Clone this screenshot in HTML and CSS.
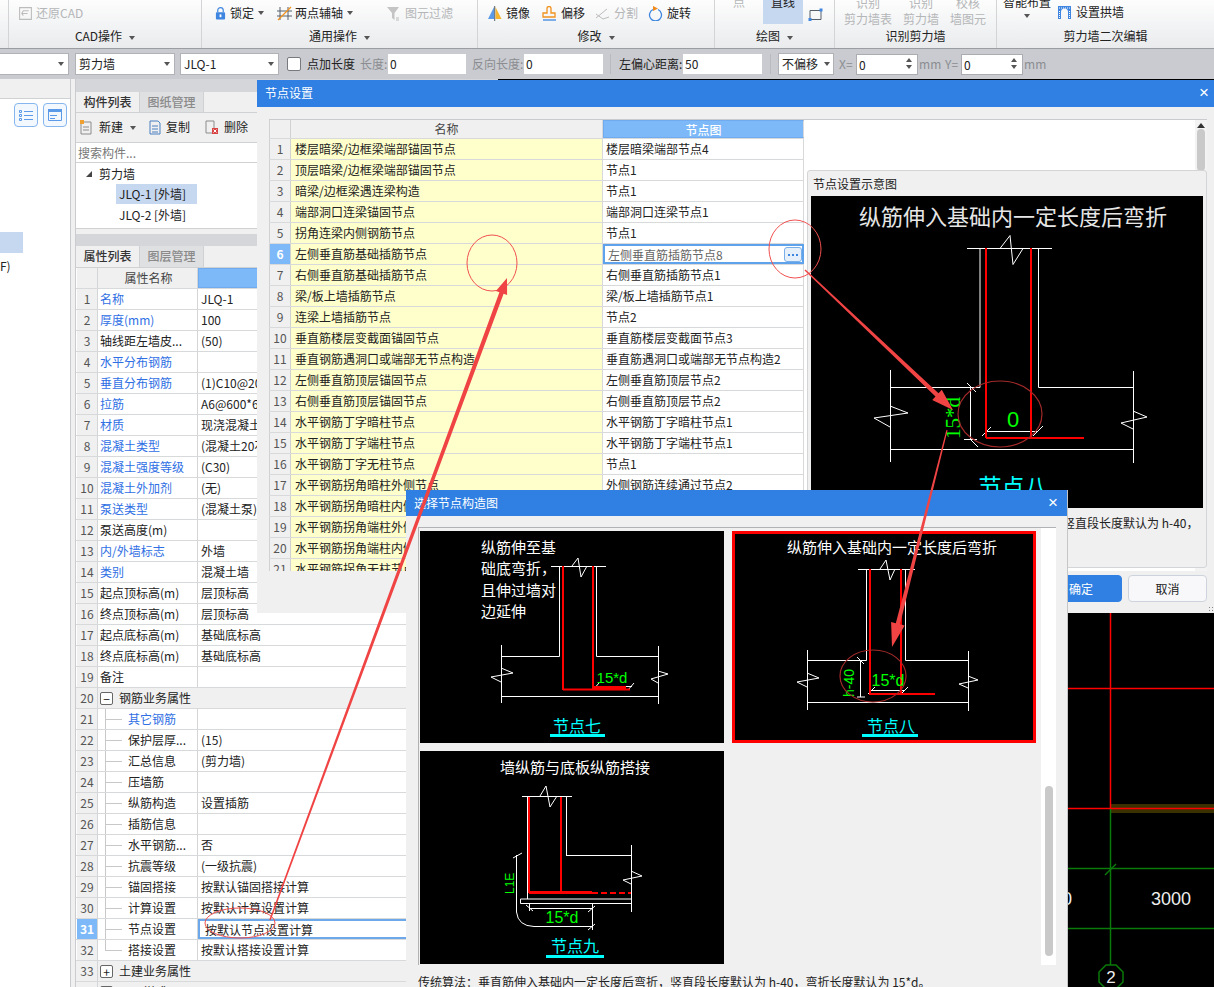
FILE: index.html
```html
<!DOCTYPE html>
<html lang="zh-CN">
<head>
<meta charset="utf-8">
<title>节点设置</title>
<link rel="stylesheet" href="styles.css">
</head>
<body>
<div class="app">
  <header class="ribbon">
    <section class="group g-cad">
      <div class="items">
        <span class="tool off"><svg class="ic" viewBox="0 0 14 14"><path d="M1.500 1.500h11v11h-11zM10 4.500H5L3.500 7 5 9M3.500 7H9" class="i-grey"/></svg>还原CAD</span>
      </div>
      <div class="glabel">CAD操作<i class="caret"></i></div>
    </section>
    <section class="group g-common">
      <div class="items">
        <span class="tool"><svg class="ic ic-lock" viewBox="0 0 12 15"><path d="M3 6V4a3 3 0 0 1 6 0v2" class="i-blue"/><rect x="1" y="6" width="10" height="8" rx="1" fill="#3f86e0"/><rect x="5" y="8.500" width="2" height="3" fill="#fff"/></svg>锁定<i class="caret caret-t"></i></span>
        <span class="tool t-axis"><svg class="ic ic-axis" viewBox="0 0 15 15"><path d="M3 1v13M11 1v13M0 5h15M0 10h15" class="i-dark"/><path d="M1 14L14 1" class="i-orange"/></svg>两点辅轴<i class="caret caret-t"></i></span>
        <span class="tool off t-filter"><svg class="ic" viewBox="0 0 15 15"><path d="M1 1h12L8.500 7v7L6 12V7z" fill="#c4c4c4"/><path d="M10 12h3M10 14h3" class="i-grey"/></svg>图元过滤</span>
      </div>
      <div class="glabel">通用操作<i class="caret"></i></div>
    </section>
    <section class="group g-edit">
      <div class="items">
        <span class="tool"><svg class="ic" viewBox="0 0 15 15"><path d="M7 1L1 13h6z" fill="#5b9ae8"/><path d="M8.500 1l6 12h-6z" fill="#f5b52e"/><path d="M7.700 0v15" class="i-dark"/></svg>镜像</span>
        <span class="tool t-gap"><svg class="ic" viewBox="0 0 15 15"><path d="M5 2.500a2 2 0 0 1 4 0V7h4v4H1V7h4z" class="i-orange"/><path d="M1 14h13" class="i-blue"/></svg>偏移</span>
        <span class="tool off t-gap2"><svg class="ic" viewBox="0 0 15 15"><path d="M1 12L12 3M1 8l7 5 6-2" class="i-grey"/></svg>分割</span>
        <span class="tool t-gap2"><svg class="ic" viewBox="0 0 15 15"><path d="M5 3.500a6 6 0 1 0 5 0" class="i-blue"/><path d="M5 0l5 2.500-5 2.500z" fill="#f08a1d"/></svg>旋转</span>
      </div>
      <div class="glabel">修改<i class="caret"></i></div>
    </section>
    <section class="group g-draw">
      <div class="items items-draw">
        <span class="clip-txt off c-point">点</span>
        <span class="clip-txt on">直线</span>
        <svg class="ic ic-rect" viewBox="0 0 15 14"><path d="M2 3h11v9H2z" class="i-dark"/><rect x="11.500" y="1" width="3" height="3" fill="#3f86e0"/><rect x="0.500" y="10.500" width="3" height="3" fill="#3f86e0"/></svg>
      </div>
      <div class="glabel">绘图<i class="caret"></i></div>
    </section>
    <section class="group g-rec">
      <div class="items items-rec">
        <span class="stack off"><b>识别</b><b>剪力墙表</b></span>
        <span class="stack off"><b>识别</b><b>剪力墙</b></span>
        <span class="stack off"><b>校核</b><b>墙图元</b></span>
      </div>
      <div class="glabel">识别剪力墙</div>
    </section>
    <section class="group g-second">
      <div class="items items-second">
        <span class="stack smart"><b>智能布置</b><i class="caret caret-t"></i></span>
        <span class="tool"><svg class="ic" viewBox="0 0 15 15"><path d="M1 1h13v13h-3V7a3.500 3.500 0 0 0-7 0v7H1z" fill="#3f86e0"/><path d="M2 3h11M2.500 6v7M12.500 6v7" stroke="#fff" stroke-dasharray="1 1" fill="none"/></svg>设置拱墙</span>
      </div>
      <div class="glabel">剪力墙二次编辑</div>
    </section>
  </header>

  <nav class="toolbar">
    <span class="sel s-1"><i class="caret caret-t"></i></span>
    <span class="sel s-2">剪力墙<i class="caret caret-t"></i></span>
    <span class="sel s-3">JLQ-1<i class="caret caret-t"></i></span>
    <span class="check"></span>
    <span class="lbl l-add">点加长度</span>
    <span class="lbl off l-len">长度:</span>
    <span class="inp i-len">0</span>
    <span class="lbl off l-rev">反向长度:</span>
    <span class="inp i-rev">0</span>
    <span class="sep s-a"></span>
    <span class="lbl l-off">左偏心距离:</span>
    <span class="inp i-off">50</span>
    <span class="sep s-b"></span>
    <span class="sel s-4">不偏移<i class="caret caret-t"></i></span>
    <span class="lbl off l-x">X=</span>
    <span class="spin">0<i class="arrows"></i></span>
    <span class="lbl off l-mm">mm</span>
    <span class="lbl off l-y">Y=</span>
    <span class="spin">0<i class="arrows"></i></span>
    <span class="lbl off l-mm">mm</span>
  </nav>

  <main class="workspace">
    <aside class="leftpane">
      <div class="lp-head"></div>
      <div class="lp-icons">
        <span class="lp-btn"><svg viewBox="0 0 16 14"><path d="M1.500 2.500h2v2h-2zM1.500 6.500h2v2h-2zM1.500 10.500h2v2h-2zM6 3.500h9M6 7.500h9M6 11.500h9" class="i-blue1"/></svg></span>
        <span class="lp-btn"><svg viewBox="0 0 16 14"><path d="M1.500 1.500h13v11h-13z" class="i-blue1"/><path d="M1 1h14v3H1z" fill="#5b9ae8"/><path d="M3 7.500h7M3 10.500h5" class="i-blue1"/></svg></span>
      </div>
      <div class="lp-sel"></div>
      <div class="lp-text">F)</div>
    </aside>

    <div class="panel">
      <div class="strip"></div>
      <div class="tabs"><span class="tab active">构件列表</span><span class="tab">图纸管理</span></div>
      <div class="ptools">
        <span class="pt pt-new"><svg class="ic" viewBox="0 0 14 15"><path d="M3 2h8v12H1V4" class="i-grey2"/><path d="M3 7h6M3 10h6" class="i-grey2"/><path d="M0 0h4v4H0z" fill="#f0a030"/></svg>新建<i class="caret caret-t"></i></span>
        <span class="pt pt-copy"><svg class="ic" viewBox="0 0 14 15"><path d="M2 1h8l2 2v11H2zM4 6h6M4 9h6M4 12h6" class="i-blue2"/></svg>复制</span>
        <span class="pt pt-del"><svg class="ic" viewBox="0 0 14 15"><path d="M1 1h8v12H1z" class="i-grey2"/><path d="M7 8h6v6H7z" fill="#d94444"/><path d="M8.500 9.500l3 3m0-3l-3 3" stroke="#fff" fill="none"/></svg>删除</span>
      </div>
      <div class="search">搜索构件...</div>
      <div class="tree">
        <div class="tr tr-0"><i class="tri"></i>剪力墙</div>
        <div class="tr tr-1"><span class="hl">JLQ-1 [外墙]</span></div>
        <div class="tr tr-1"><span class="ph">JLQ-2 [外墙]</span></div>
      </div>
      <div class="gapv"></div>
      <div class="strip strip-2"></div>
      <div class="tabs tabs-2"><span class="tab active">属性列表</span><span class="tab">图层管理</span></div>
      <div class="ptable">
        <div class="prow head"><span class="n"></span><span class="k">属性名称</span><span class="v hsel"></span></div>
        <div class="prow"><span class="n">1</span><span class="k blue">名称</span><span class="v">JLQ-1</span></div>
        <div class="prow"><span class="n">2</span><span class="k blue">厚度(mm)</span><span class="v">100</span></div>
        <div class="prow"><span class="n">3</span><span class="k">轴线距左墙皮...</span><span class="v">(50)</span></div>
        <div class="prow"><span class="n">4</span><span class="k blue">水平分布钢筋</span><span class="v"></span></div>
        <div class="prow"><span class="n">5</span><span class="k blue">垂直分布钢筋</span><span class="v">(1)C10@200</span></div>
        <div class="prow"><span class="n">6</span><span class="k blue">拉筋</span><span class="v">A6@600*600</span></div>
        <div class="prow"><span class="n">7</span><span class="k blue">材质</span><span class="v">现浇混凝土</span></div>
        <div class="prow"><span class="n">8</span><span class="k blue">混凝土类型</span><span class="v">(混凝土20石子)</span></div>
        <div class="prow"><span class="n">9</span><span class="k blue">混凝土强度等级</span><span class="v">(C30)</span></div>
        <div class="prow"><span class="n">10</span><span class="k blue">混凝土外加剂</span><span class="v">(无)</span></div>
        <div class="prow"><span class="n">11</span><span class="k blue">泵送类型</span><span class="v">(混凝土泵)</span></div>
        <div class="prow"><span class="n">12</span><span class="k">泵送高度(m)</span><span class="v"></span></div>
        <div class="prow"><span class="n">13</span><span class="k blue">内/外墙标志</span><span class="v">外墙</span></div>
        <div class="prow"><span class="n">14</span><span class="k blue">类别</span><span class="v">混凝土墙</span></div>
        <div class="prow"><span class="n">15</span><span class="k">起点顶标高(m)</span><span class="v">层顶标高</span></div>
        <div class="prow"><span class="n">16</span><span class="k">终点顶标高(m)</span><span class="v">层顶标高</span></div>
        <div class="prow"><span class="n">17</span><span class="k">起点底标高(m)</span><span class="v">基础底标高</span></div>
        <div class="prow"><span class="n">18</span><span class="k">终点底标高(m)</span><span class="v">基础底标高</span></div>
        <div class="prow"><span class="n">19</span><span class="k">备注</span><span class="v"></span></div>
        <div class="prow grp"><span class="n">20</span><span class="gk"><i class="box">−</i>钢筋业务属性</span></div>
        <div class="prow sub"><span class="n">21</span><span class="k blue">其它钢筋</span><span class="v"></span></div>
        <div class="prow sub"><span class="n">22</span><span class="k">保护层厚...</span><span class="v">(15)</span></div>
        <div class="prow sub"><span class="n">23</span><span class="k">汇总信息</span><span class="v">(剪力墙)</span></div>
        <div class="prow sub"><span class="n">24</span><span class="k">压墙筋</span><span class="v"></span></div>
        <div class="prow sub"><span class="n">25</span><span class="k">纵筋构造</span><span class="v">设置插筋</span></div>
        <div class="prow sub"><span class="n">26</span><span class="k">插筋信息</span><span class="v"></span></div>
        <div class="prow sub"><span class="n">27</span><span class="k">水平钢筋...</span><span class="v">否</span></div>
        <div class="prow sub"><span class="n">28</span><span class="k">抗震等级</span><span class="v">(一级抗震)</span></div>
        <div class="prow sub"><span class="n">29</span><span class="k">锚固搭接</span><span class="v">按默认锚固搭接计算</span></div>
        <div class="prow sub"><span class="n">30</span><span class="k">计算设置</span><span class="v">按默认计算设置计算</span></div>
        <div class="prow sub cur"><span class="n">31</span><span class="k">节点设置</span><span class="v">按默认节点设置计算</span></div>
        <div class="prow sub last"><span class="n">32</span><span class="k">搭接设置</span><span class="v">按默认搭接设置计算</span></div>
        <div class="prow grp"><span class="n">33</span><span class="gk"><i class="box">+</i>土建业务属性</span></div>
        <div class="prow grp"><span class="n">34</span><span class="gk"><i class="box">+</i>显示样式</span></div>
      </div>
    </div>

    <div class="canvas">
      <svg class="cad" viewBox="498 79 716 908">
        <rect x="1111" y="804" width="103" height="9" fill="#3a3000"/>
        <path d="M1068 688.500H1214M1068 808.500H1214M1110.500 613V808" class="c-red"/>
        <path d="M1068 868.500H1214M1068 928.500H1214M1110.500 809V965" class="c-green"/>
        <path d="M1105 875l11-11" class="c-green"/>
        <path d="M1106 965h10l7 7v10l-7 7h-10l-7-7v-10z" class="c-green"/>
        <text x="1171" y="905" class="c-num">3000</text>
        <text x="1072" y="905" class="c-num c-end">3000</text>
        <text x="1111" y="983" class="c-num c-2">2</text>
      </svg>
    </div>
  </main>
</div>

<section class="win win-node">
  <div class="wtitle">节点设置<span class="x">×</span></div>
  <div class="wbody">
    <div class="grid-box">
      <div class="nrow head"><span class="n"></span><span class="nk">名称</span><span class="nv hsel">节点图</span></div>
      <div class="nrow"><span class="n">1</span><span class="nk">楼层暗梁/边框梁端部锚固节点</span><span class="nv">楼层暗梁端部节点4</span></div>
      <div class="nrow"><span class="n">2</span><span class="nk">顶层暗梁/边框梁端部锚固节点</span><span class="nv">节点1</span></div>
      <div class="nrow"><span class="n">3</span><span class="nk">暗梁/边框梁遇连梁构造</span><span class="nv">节点1</span></div>
      <div class="nrow"><span class="n">4</span><span class="nk">端部洞口连梁锚固节点</span><span class="nv">端部洞口连梁节点1</span></div>
      <div class="nrow"><span class="n">5</span><span class="nk">拐角连梁内侧钢筋节点</span><span class="nv">节点1</span></div>
      <div class="nrow cur"><span class="n">6</span><span class="nk">左侧垂直筋基础插筋节点</span><span class="nv">左侧垂直筋插筋节点8<i class="more"><svg viewBox="0 0 16 13"><path d="M3 6h2v2H3zM7 6h2v2H7zM11 6h2v2h-2z" fill="#3f86e0"/></svg></i></span></div>
      <div class="nrow"><span class="n">7</span><span class="nk">右侧垂直筋基础插筋节点</span><span class="nv">右侧垂直筋插筋节点1</span></div>
      <div class="nrow"><span class="n">8</span><span class="nk">梁/板上墙插筋节点</span><span class="nv">梁/板上墙插筋节点1</span></div>
      <div class="nrow"><span class="n">9</span><span class="nk">连梁上墙插筋节点</span><span class="nv">节点2</span></div>
      <div class="nrow"><span class="n">10</span><span class="nk">垂直筋楼层变截面锚固节点</span><span class="nv">垂直筋楼层变截面节点3</span></div>
      <div class="nrow"><span class="n">11</span><span class="nk">垂直钢筋遇洞口或端部无节点构造</span><span class="nv">垂直筋遇洞口或端部无节点构造2</span></div>
      <div class="nrow"><span class="n">12</span><span class="nk">左侧垂直筋顶层锚固节点</span><span class="nv">左侧垂直筋顶层节点2</span></div>
      <div class="nrow"><span class="n">13</span><span class="nk">右侧垂直筋顶层锚固节点</span><span class="nv">右侧垂直筋顶层节点2</span></div>
      <div class="nrow"><span class="n">14</span><span class="nk">水平钢筋丁字暗柱节点</span><span class="nv">水平钢筋丁字暗柱节点1</span></div>
      <div class="nrow"><span class="n">15</span><span class="nk">水平钢筋丁字端柱节点</span><span class="nv">水平钢筋丁字端柱节点1</span></div>
      <div class="nrow"><span class="n">16</span><span class="nk">水平钢筋丁字无柱节点</span><span class="nv">节点1</span></div>
      <div class="nrow"><span class="n">17</span><span class="nk">水平钢筋拐角暗柱外侧节点</span><span class="nv">外侧钢筋连续通过节点2</span></div>
      <div class="nrow"><span class="n">18</span><span class="nk">水平钢筋拐角暗柱内侧节点</span><span class="nv">节点1</span></div>
      <div class="nrow"><span class="n">19</span><span class="nk">水平钢筋拐角端柱外侧节点</span><span class="nv">节点1</span></div>
      <div class="nrow"><span class="n">20</span><span class="nk">水平钢筋拐角端柱内侧节点</span><span class="nv">节点1</span></div>
      <div class="nrow"><span class="n">21</span><span class="nk">水平钢筋拐角无柱节点</span><span class="nv">节点1</span></div>
      <div class="vscroll"><i class="up"></i><i class="thumb"></i></div>
    </div>
    <div class="preview">
      <div class="ptitle">节点设置示意图</div>
      <svg class="pv-img" viewBox="811 196 392 312">
        <rect x="811" y="196" width="392" height="312" fill="#000"/>
        <text x="1013" y="225" class="d-title d-big">纵筋伸入基础内一定长度后弯折</text>
        <path d="M967 248.500H1052M980 248.500V387.500M1038.500 248.500V387.500M890 387.500H980M1038.500 387.500H1133M890.500 370V462M1133.500 371V463M890 449.500H1133M890 406l18 7-34 5 16 9M1133 411l14 6-26 6 12 6M1000 248.500l10-13 3 29 10-16M970.500 387V439M967 383l9 9M964 439.500h13M970 439l8 8M985 431.500H1037M982 436l9-9M1033 436l10-10" class="d-w"/>
        <path d="M986 248V438M1031 248V438M986 438H1084" class="d-r"/>
        <text x="1013" y="427" class="d-g d-22">0</text>
        <text transform="translate(960 439) rotate(-90)" class="d-g d-serif">15*d</text>
        <text x="1013" y="495" class="d-c d-24">节点八</text>
      </svg>
      <p class="pdesc">传统算法：垂直筋伸入基础内一定长度后弯折，竖直段长度默认为 h-40，弯折长度默认为 15*d。</p>
    </div>
    <div class="btns"><span class="btn ok">确定</span><span class="btn">取消</span></div>
    <i class="grip"></i>
  </div>
</section>

<section class="win win-pick">
  <div class="wtitle wt2">选择节点构造图<span class="x">×</span></div>
  <div class="wbody2">
    <div class="scroller">
      <div class="cells">
        <figure class="cell">
          <svg viewBox="420 531 304 212">
            <text x="481" y="553" class="d-title2 d-left">纵筋伸至基</text>
            <text x="481" y="574" class="d-title2 d-left">础底弯折，</text>
            <text x="481" y="596" class="d-title2 d-left">且伸过墙对</text>
            <text x="481" y="617" class="d-title2 d-left">边延伸</text>
            <path d="M551 566.500H606M559.500 566V656.500M596.500 566V656.500M501 656.500H559.500M596.500 656.500H658M501.500 645V703M658.500 646V704M501 696.500H658M501 668l12 5-22 4 10 5M658 671l10 3-17 5 7 4M572 566l6-8 3 19 6-11M595 686.500H632M593 690l6-7M628 690l6-7" class="d-w"/>
            <path d="M563 566V690M593 566V690M563 689.500H630" class="d-r"/>
            <path d="M593 687.500H626" class="d-r3"/>
            <text x="612" y="683" class="d-g d-15">15*d</text>
            <text x="577" y="732" class="d-c d-17">节点七</text>
            <rect x="550" y="734" width="55" height="3" fill="#0ff"/>
          </svg>
        </figure>
        <figure class="cell cell-on">
          <svg viewBox="732 531 304 212">
            <text x="892" y="553" class="d-title2">纵筋伸入基础内一定长度后弯折</text>
            <path d="M858 569.500H915M866.500 569V660.500M905.500 569V660.500M807 660.500H866.500M905.500 660.500H968M807.500 650V710M968.500 651V711M807 702.500H968M807 673l12 5-22 4 10 5M968 676l10 4-19 4 9 4M880 569l6-9 4 20 5-11M860.500 660V697M857 657l7 7M857 697h8M870 690.500H905M868 694l7-7M901 694l7-7" class="d-w"/>
            <path d="M870 569V695M901 569V695M870 694H935" class="d-r"/>
            <text x="888" y="686" class="d-g d-16">15*d</text>
            <text transform="translate(854 697) rotate(-90)" class="d-g d-14">h-40</text>
            <text x="891" y="732" class="d-c d-17">节点八</text>
            <rect x="862" y="734" width="56" height="3" fill="#0ff"/>
          </svg>
        </figure>
        <figure class="cell cell-3">
          <svg viewBox="420 751 304 213">
            <text x="575" y="773" class="d-title2">墙纵筋与底板纵筋搭接</text>
            <path d="M522 796.500H572M527.500 796V899M566.500 796V855.500M566 855.500H631M631.500 845V912M520.500 899H631.500V903.500H520.500ZM631 871l11 5-19 4 8 4M540 796l6-10 4 21 7-11M516.500 855V912Q518 926 534 926.500H593M592.500 904V930M529.500 904V911M529 908.500H593M513 858l9-5M526 905l7 6M588 930l7-6M588 912l7-6" class="d-w"/>
            <path d="M529 797V893M561 797V893" class="d-r"/>
            <path d="M529 892.500H592" class="d-r3"/>
            <path d="M592 893H631" class="d-rd"/>
            <text x="562" y="923" class="d-g d-16">15*d</text>
            <text transform="translate(514 894) rotate(-90)" class="d-g d-12">L1E</text>
            <text x="575" y="952" class="d-c d-17">节点九</text>
            <rect x="546" y="955" width="58" height="3" fill="#0ff"/>
          </svg>
        </figure>
      </div>
      <div class="vbar"><i></i></div>
    </div>
    <p class="caption">传统算法：垂直筋伸入基础内一定长度后弯折，竖直段长度默认为 h-40，弯折长度默认为 15*d。</p>
  </div>
</section>

<svg class="marks" viewBox="0 0 1214 987">
  <ellipse cx="492" cy="263" rx="25" ry="28" class="m-c"/>
  <ellipse cx="795" cy="249" rx="26" ry="29" class="m-c"/>
  <ellipse cx="1000" cy="414" rx="42" ry="33" class="m-d"/>
  <ellipse cx="873" cy="676" rx="33" ry="26" class="m-d"/>
  <ellipse cx="240" cy="923" rx="35" ry="15" class="m-c"/>
  <polygon points="269.300,919.800 499.400,292.300 495.900,291 507,278 507.100,295 503.600,293.800 270.700,920.300" class="m-a"/>
  <polygon points="805.500,269.500 938.500,393.300 941.800,389.800 953,410 932.200,400 935.500,396.500 804.500,270.500" class="m-a"/>
  <polygon points="946.400,430 895.800,623.200 891.100,622 892,647 904.700,625.400 900,624.200 947.600,430.300" class="m-a"/>
</svg>
</body>
</html>
```

FILE: styles.css
```css
* { box-sizing: border-box; }
html, body { margin: 0; padding: 0; }
body {
  position: relative;
  width: 1214px;
  height: 987px;
  overflow: hidden;
  background: #f0f0f0;
  color: #222;
  font: 12px/1.2 "Noto Sans CJK SC", "Liberation Sans", sans-serif;
}
i { font-style: normal; }
figure, p { margin: 0; }
.app { display: flex; flex-direction: column; height: 987px; }

/* ribbon */
.ribbon {
  display: flex;
  height: 49px;
  padding-left: 8px;
  background: linear-gradient(#fdfdfd, #e9ebed);
  border-bottom: 1px solid #9a9da1;
  flex: none;
}
.group {
  display: flex;
  flex-direction: column;
  border-left: 1px solid #d2d4d6;
  overflow: hidden;
  flex: none;
}
.g-cad { width: 193px; }
.g-common { width: 276px; }
.g-edit { width: 237px; }
.g-draw { width: 120px; }
.g-rec { width: 162px; }
.g-second { width: 218px; }
.items { display: flex; align-items: center; height: 26px; flex: none; }
.g-cad .items { padding-left: 9px; }
.g-common .items { padding-left: 13px; }
.g-edit .items { padding-left: 9px; }
.glabel { margin-top: 1px; text-align: center; line-height: 18px; height: 20px; color: #222; }
.tool { display: inline-flex; align-items: center; white-space: nowrap; }
.ic { width: 15px; height: 15px; margin-right: 4px; flex: none; }
.ic-lock { width: 11px; }
.ic-axis { margin-right: 3px; }
.g-cad .ic { margin-right: 3px; }
.off { color: #b4b6b8; }
.t-axis { margin-left: 13px; }
.t-filter { margin-left: 33px; }
.t-gap { margin-left: 12px; }
.t-gap2 { margin-left: 10px; }
.caret {
  display: inline-block;
  width: 0; height: 0;
  margin-left: 7px;
  border: 3.500px solid transparent;
  border-top: 4px solid #555;
  border-bottom: 0;
  vertical-align: middle;
}
.caret-t { margin-left: 4px; }
.i-grey { fill: none; stroke: #bcbcbc; }
.i-grey2 { fill: none; stroke: #8c8c8c; }
.i-blue { fill: none; stroke: #3f86e0; stroke-width: 1.300; }
.i-blue1 { fill: none; stroke: #5b9ae8; stroke-width: 1; }
.i-blue2 { fill: none; stroke: #4a7fc0; }
.i-dark { fill: none; stroke: #55606c; }
.i-orange { fill: none; stroke: #f0921e; stroke-width: 1.300; }

.items-draw { align-items: flex-start; padding-left: 18px; }
.clip-txt { display: block; height: 24px; line-height: 4px; overflow: hidden; }
.c-point { width: 30px; }
.clip-txt.on { width: 40px; text-align: center; background: #c6d8f0; color: #222; }
.ic-rect { margin: 7px 0 0 5px; }
.items-rec { align-items: flex-start; padding-left: 9px; gap: 11px; }
.stack { display: flex; flex-direction: column; align-items: center; margin-top: -5px; }
.stack b { font-weight: 400; line-height: 16px; height: 16px; }
.items-second { align-items: flex-start; padding-left: 6px; }
.smart { margin-top: -6px; }
.smart .caret { margin: 4px 0 0; }
.items-second .tool { margin: 5px 0 0 6px; }

/* toolbar */
.toolbar {
  display: flex;
  align-items: center;
  height: 30px;
  flex: none;
  background: #c9cbd0;
  color: #222;
  white-space: nowrap;
}
.toolbar .off { color: #8b8d90; }
.sel {
  display: flex;
  align-items: center;
  justify-content: space-between;
  height: 22px;
  padding: 0 4px 0 3px;
  background: #fff;
  border: 1px solid #b0b2b6;
  flex: none;
}
.s-1 { width: 69px; justify-content: flex-end; border-left: 0; }
.s-2 { width: 100px; margin-left: 6px; }
.s-3 { width: 99px; margin-left: 5px; }
.s-4 { width: 56px; margin-left: 7px; padding: 0 3px; }
.s-4 .caret { margin-left: 0; }
.check {
  width: 14px; height: 14px;
  margin-left: 8px;
  background: #fff;
  border: 1px solid #77797c;
  border-radius: 2px;
  flex: none;
}
.lbl { flex: none; }
.l-add { margin-left: 6px; }
.l-len { margin-left: 5px; width: 28px; }
.inp {
  height: 20px; line-height: 20px;
  padding-left: 2px;
  background: #fff;
  flex: none;
}
.i-len { width: 78px; }
.l-rev { margin-left: 6px; width: 52px; }
.i-rev { width: 79px; }
.sep { width: 1px; height: 20px; background: #b8babd; flex: none; }
.s-a { margin-left: 7px; }
.l-off { margin-left: 8px; width: 64px; }
.i-off { width: 79px; }
.s-b { margin-left: 8px; }
.l-x { margin-left: 5px; width: 17px; }
.spin {
  position: relative;
  width: 62px; height: 21px; line-height: 19px;
  padding-left: 2px;
  background: #fff;
  border: 1px solid #aaacb0;
  flex: none;
}
.arrows {
  position: absolute;
  right: 5px; top: 3px;
  width: 0; height: 0;
  border: 3px solid transparent;
  border-bottom: 4px solid #555;
  border-top: 0;
}
.arrows::after {
  content: "";
  position: absolute;
  left: -3px; top: 7px;
  border: 3px solid transparent;
  border-top: 4px solid #555;
  border-bottom: 0;
}
.l-mm { margin-left: 1px; width: 21px; }
.l-y { margin-left: 5px; width: 16px; }

/* workspace */
.workspace { display: flex; flex: 1; min-height: 0; overflow: hidden; }
.leftpane {
  width: 71px;
  flex: none;
  background: #fff;
  border-right: 1px solid #c9cbce;
}
.lp-head { height: 20px; background: #f0f0f0; border-bottom: 1px solid #cfd1d3; }
.lp-icons { display: flex; gap: 5px; padding: 4px 0 0 14px; }
.lp-btn {
  display: flex; align-items: center; justify-content: center;
  width: 24px; height: 24px;
  background: #f3f8fe;
  border: 1px solid #86b6ee;
  border-radius: 4px;
}
.lp-btn svg { width: 16px; height: 14px; }
.lp-sel { width: 23px; height: 21px; margin-top: 105px; background: #c6d8f0; }
.lp-text { margin-top: 5px; line-height: 16px; }

.panel { width: 423px; margin-left: 4px; flex: none; background: #fff; border-left: 1px solid #c9cbce; }
.strip { height: 13px; background: #d4d6da; }
.strip-2 { height: 12px; }
.gapv { height: 5px; background: #f0f0f0; }
.tabs { display: flex; height: 21px; background: #f0f0f0; border-bottom: 1px solid #cfd1d3; }
.tabs-2 { height: 22px; }
.tab {
  width: 64px;
  text-align: center;
  line-height: 20px;
  color: #8a8a8a;
  background: #dfe0e2;
  font-weight: 500;
  border-right: 1px solid #cfd1d3;
}
.tab.active { background: #f0f0f0; color: #333; }
.ptools {
  display: flex; align-items: center;
  height: 30px;
  background: #f0f0f0;
  border-bottom: 1px solid #cfd1d3;
  padding-left: 4px;
}
.pt { display: inline-flex; align-items: center; white-space: nowrap; }
.pt .ic { margin-right: 4px; width: 14px; }
.pt-new .ic, .pt-del .ic { margin-right: 5px; }
.pt .caret { margin-left: 7px; }
.pt-copy { margin-left: 12px; }
.pt-del { margin-left: 15px; }
.search { height: 20px; line-height: 19px; padding-left: 2px; color: #777; border-bottom: 1px solid #cfd1d3; }
.tree { height: 66px; border-bottom: 1px solid #cfd1d3; }
.tr { height: 21px; line-height: 20px; }
.tr-0 { padding-left: 10px; display: flex; align-items: center; }
.tri {
  width: 0; height: 0;
  margin-right: 7px;
  border-style: solid;
  border-width: 0 0 6px 6px;
  border-color: transparent transparent #444 transparent;
}
.tr-1 { padding-left: 40px; }
.hl, .ph { display: block; width: 81px; padding-left: 3px; }
.hl { background: #c6d8f0; }

.ptable { background: #fff; }
.prow {
  display: grid;
  grid-template-columns: 22px 100px 1fr;
  height: 21px;
  line-height: 20px;
  border-bottom: 1px solid #d8d9db;
  white-space: nowrap;
}
.prow .n {
  margin-left: 1px;
  text-align: center;
  color: #555;
  background: #f0f0f0;
  border-right: 1px solid #d4d5d7;
}
.prow .k { padding-left: 2px; border-right: 1px solid #d4d5d7; overflow: hidden; }
.prow .v { padding-left: 3px; overflow: hidden; }
.prow.head .k { text-align: center; background: #f0f0f0; color: #444; }
.blue { color: #2f6fe4; }
.hsel { background: #7db9f9; color: #fff; text-align: center; border: 1px solid #6fabee; font-weight: 500; }
.prow.head .hsel { padding: 0; }
.grp { grid-template-columns: 22px 1fr; background: #f0f0f0; }
.gk { display: flex; align-items: center; padding-left: 2px; }
.box {
  width: 13px; height: 13px;
  margin-right: 6px;
  line-height: 11px;
  text-align: center;
  background: #fff;
  border: 1px solid #666;
  border-radius: 2px;
}
.prow.sub .k {
  padding-left: 30px;
  background:
    linear-gradient(#c8c8c8, #c8c8c8) no-repeat 7px 10px / 17px 1px,
    linear-gradient(#c8c8c8, #c8c8c8) no-repeat 7px 0 / 1px 100%;
}
.prow.sub.last .k {
  background:
    linear-gradient(#c8c8c8, #c8c8c8) no-repeat 7px 10px / 17px 1px,
    linear-gradient(#c8c8c8, #c8c8c8) no-repeat 7px 0 / 1px 11px;
}
.sub.cur .n { background: #7db9f9; color: #fff; font-weight: 700; }
.sub.cur .v { padding-left: 5px; border: 2px solid #6da9ea; border-right: 0; line-height: 17px; }

/* canvas */
.canvas { flex: 1; background: #000; min-width: 0; }
.cad { display: block; width: 716px; height: 908px; }
.c-red { fill: none; stroke: #f00; stroke-width: 1.500; }
.c-green { fill: none; stroke: #0a7a0a; stroke-width: 1.500; }
.c-num { fill: #eee; font: 18px "Liberation Sans", sans-serif; text-anchor: middle; }
.c-end { text-anchor: end; }
.c-2 { font-size: 17px; }

/* windows */
.win { position: absolute; background: #f0f0f0; overflow: hidden; }
.win-node { left: 257px; top: 80px; width: 957px; height: 533px; }
.win-pick { left: 406px; top: 490px; width: 662px; height: 497px; border-right: 1px solid #c4c6c8; }
.wtitle {
  position: relative;
  height: 27px;
  line-height: 26px;
  padding-left: 8px;
  color: #fff;
  background: #2f80e2;
}
.wt2 { height: 26px; }
.x {
  position: absolute;
  right: 3px; top: 0;
  width: 14px;
  text-align: center;
  font-size: 17px;
  line-height: 26px;
  font-family: "Liberation Sans", sans-serif;
}
.win-pick .x { right: 7px; }
.wbody { position: relative; height: 506px; padding: 12px 7px 0 12px; }
.grid-box {
  position: relative;
  height: 452px;
  background: #fff;
  border-top: 1px solid #c9cbce;
  overflow: hidden;
}
.nrow {
  display: grid;
  grid-template-columns: 22px 312px 201px;
  width: 535px;
  height: 21px;
  line-height: 20px;
  white-space: nowrap;
  border-bottom: 1px solid #d8d9db;
}
.nrow.head { height: 19px; line-height: 18px; }
.nrow .n { text-align: center; color: #555; background: #f0f0f0; border-left: 1px solid #cfd1d3; border-right: 1px solid #cfd1d3; }
.nk { padding-left: 4px; background: #ffffcc; border-right: 1px solid #d8d9db; overflow: hidden; }
.nv { padding-left: 3px; border-right: 1px solid #d8d9db; overflow: hidden; }
.nrow.head .nk { text-align: center; background: #f0f0f0; color: #444; padding: 0; }
.nrow.head .nv { padding: 0; }
.nrow.cur .n { background: #7db9f9; color: #fff; font-weight: 700; }
.nrow.cur .nv {
  position: relative;
  padding-left: 3px;
  line-height: 17px;
  color: #666;
  border: 2px solid #5ea2ec;
}
.more {
  position: absolute;
  right: 0; top: 1px;
  width: 18px; height: 15px;
  background: #e6f0fb;
  border: 1px solid #7aaee8;
  border-radius: 3px;
}
.more svg { display: block; width: 16px; height: 13px; }
.vscroll { position: absolute; right: 0; top: 0; width: 12px; height: 100%; background: #f3f3f3; }
.up {
  position: absolute; left: 2px; top: 3px;
  border: 4px solid transparent;
  border-bottom: 5px solid #333;
  border-top: 0;
}
.thumb { position: absolute; left: 2px; top: 9px; width: 8px; height: 42px; background: #c9c9c9; border-radius: 4px; }
.preview {
  position: absolute;
  left: 550px; top: 63px;
  width: 400px; height: 398px;
  padding: 0 3px;
  background: #f0f0f0;
  border: 1px solid #d4d5d7;
  border-radius: 3px;
}
.ptitle { height: 25px; line-height: 26px; padding-left: 2px; }
.pv-img { display: block; width: 392px; height: 312px; }
.pdesc { margin-top: 6px; line-height: 18px; width: 392px; }
.btns { display: flex; justify-content: flex-end; gap: 6px; margin-top: 4px; }
.btn {
  width: 79px; height: 27px;
  line-height: 25px;
  text-align: center;
  background: #f8f8fa;
  border: 1px solid #cdd3dc;
  border-radius: 4px;
}
.btn.ok { width: 82px; color: #fff; background: #2f80e2; border-color: #2f80e2; }
.grip {
  position: absolute;
  right: 1px; bottom: 2px;
  width: 5px; height: 5px;
  background: radial-gradient(circle, #888 40%, transparent 45%) 0 0 / 3px 3px;
}
.wbody2 { height: 471px; padding: 11px 0 0 12px; }
.scroller {
  display: flex;
  width: 638px;
  height: 438px;
  border-top: 1px solid #b0b2b4;
  border-left: 1px solid #b0b2b4;
}
.cells {
  display: grid;
  grid-template-columns: 304px 304px;
  grid-template-rows: 212px 213px;
  gap: 8px;
  width: 622px;
  padding: 3px 0 0 1px;
  flex: none;
}
.cell { background: #000; position: relative; }
.cell svg { display: block; width: 100%; height: 100%; }
.cell-on { outline: 3px solid #f00; outline-offset: -3px; }
.vbar { position: relative; width: 15px; background: #fff; flex: none; }
.vbar i { position: absolute; left: 4px; top: 258px; width: 8px; height: 170px; background: #c9c9c9; border-radius: 4px; }
.caption { margin-top: 9px; line-height: 16px; white-space: nowrap; }

/* drawings */
.d-w { fill: none; stroke: #fff; stroke-width: 1; }
.d-r { fill: none; stroke: #f00; stroke-width: 2; }
.d-r3 { fill: none; stroke: #f00; stroke-width: 3; }
.d-rd { fill: none; stroke: #f00; stroke-width: 2; stroke-dasharray: 6 3; }
.d-title { fill: #e6e6e6; text-anchor: middle; }
.d-big { font-size: 22px; }
.d-title2 { fill: #fff; font-size: 15px; text-anchor: middle; }
.d-left { text-anchor: start; }
.d-g { fill: #0f0; text-anchor: middle; font-family: "Liberation Sans", sans-serif; }
text.d-serif { font: 21px "Liberation Serif", serif; text-anchor: start; }
.d-22 { font-size: 22px; }
.d-16 { font-size: 16px; }
.d-15 { font-size: 15px; }
.d-14 { font-size: 14px; text-anchor: start; }
.d-12 { font-size: 12px; text-anchor: start; }
.d-c { fill: #0ff; text-anchor: middle; }
.d-24 { font-size: 23px; }
.d-17 { font-size: 16px; }

/* annotations */
.marks { position: absolute; left: 0; top: 0; width: 1214px; height: 987px; pointer-events: none; }
.m-c { fill: none; stroke: #f0504f; stroke-width: 1; }
.m-d { fill: none; stroke: #a32a2a; stroke-width: 1.200; }
.m-a { fill: #f04444; }
```
